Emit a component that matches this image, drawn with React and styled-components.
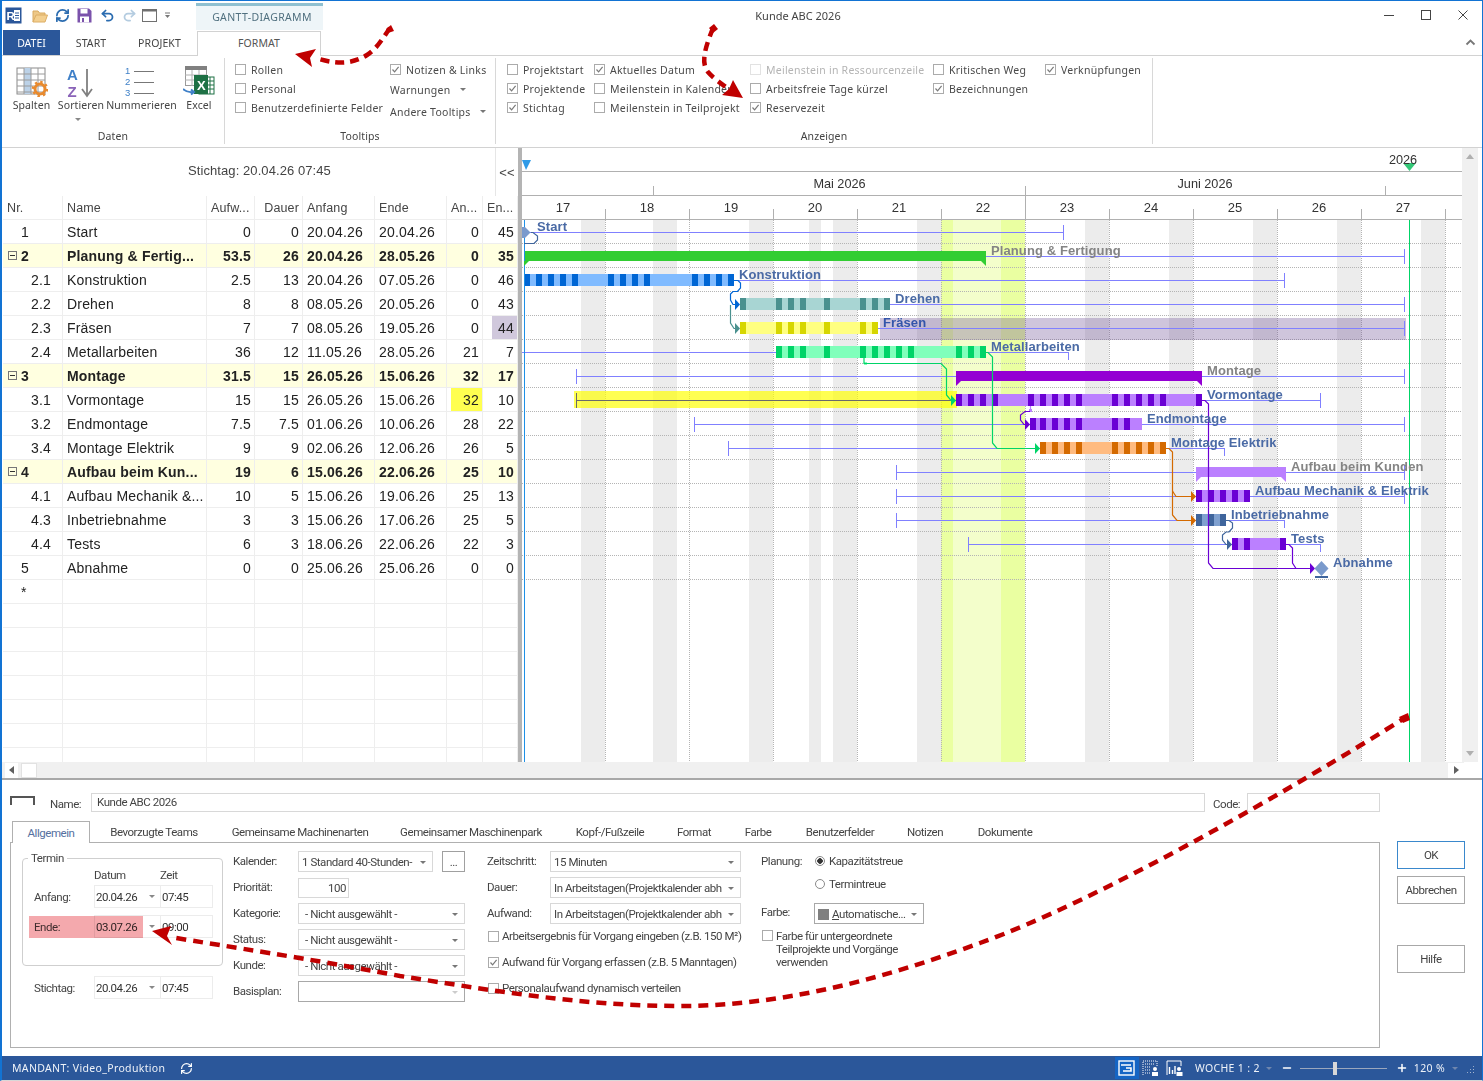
import React from "react";
import styled, { createGlobalStyle } from "styled-components";
import { RefreshCw, Undo2, Redo2, Plus, Minus } from "lucide-react";

const ARIAL = `"Liberation Sans", Arial, sans-serif`;
const RIBBON_FONT = `"Noto Sans", "Open Sans", sans-serif`;
const FORM_FONT = `Roboto, "Noto Sans", sans-serif`;

const GlobalStyle = createGlobalStyle`
  html, body { margin: 0; padding: 0; background: #fff; }
  * { box-sizing: border-box; }
`;

const Window = styled.div`
  position: relative;
  width: 1483px;
  height: 1081px;
  overflow: hidden;
  background: #fff;
  border-top: 1px solid #1273d3;
  border-left: 2px solid #1273d3;
  border-right: 1px solid #1273d3;
  border-bottom: 1px solid #d8d8d8;
  font-family: ${RIBBON_FONT};
  color: #444;
  display: flex;
  flex-direction: column;
`;

/* title bar */
const TitleBar = styled.div`
  height: 29px;
  display: flex;
  flex-shrink: 0;
`;
const Qat = styled.div`
  width: 194px;
  display: flex;
  align-items: center;
  padding: 0 0 0 3px;
`;
const QatSlot = styled.span`
  width: ${(p) => p.$w}px;
  display: flex;
  align-items: center;
`;
const ContextTab = styled.div`
  width: 127px;
  margin-top: 2px;
  padding: 0 0 3px 5px;
  background: #eef5f8;
  border-top: 3px solid #8fc0d0;
  color: #50707f;
  font-size: 10.5px;
  letter-spacing: 0.35px;
  display: flex;
  align-items: center;
  justify-content: center;
`;
const WindowTitle = styled.div`
  width: 950px;
  text-align: center;
  line-height: 29px;
  padding-bottom: 1px;
  font-size: 11px;
  color: #444;
`;
const WindowControls = styled.div`
  margin-left: auto;
  display: flex;
  align-items: center;
  padding: 0 11px 2px 0;
  gap: 21px;
`;

/* ribbon tabs */
const TabBar = styled.div`
  height: 25px;
  display: flex;
  align-items: stretch;
  flex-shrink: 0;
  position: relative;
`;
const FileTab = styled.div`
  width: 57px;
  margin-left: 1px;
  background: #2b579a;
  color: #fff;
  font-size: 10.5px;
  display: flex;
  align-items: center;
  justify-content: center;
`;
const RibbonTab = styled.div`
  width: ${(p) => p.$w}px;
  display: flex;
  align-items: center;
  justify-content: center;
  font-size: 10.5px;
  letter-spacing: 0.1px;
  color: #444;
  ${(p) =>
    p.$active &&
    `background:#fff; border:1px solid #d2d2d2; border-bottom:0; margin-bottom:-1px; z-index:1; margin-top:1px; padding-bottom:2px; color:#555;`}
`;
const Collapse = styled.span`
  margin-left: auto;
  margin-right: 6px;
  padding-bottom: 2px;
  align-self: center;
  display: flex;
`;

/* ribbon */
const Ribbon = styled.div`
  height: 93px;
  flex-shrink: 0;
  display: flex;
  border-top: 1px solid #d2d2d2;
  border-bottom: 1px solid #d2d2d2;
  font-size: 10.5px;
`;
const RibbonGroup = styled.div`
  width: ${(p) => p.$w}px;
  margin: 2px 0 3px;
  border-right: 1px solid #d8d8d8;
  display: flex;
  flex-direction: column;
`;
const GroupBody = styled.div`
  flex: 1;
  min-height: 0;
  display: flex;
  padding: ${(p) => p.$pad || "2px 0 0 0"};
`;
const GroupLabel = styled.div`
  height: 16px;
  flex-shrink: 0;
  text-align: center;
  line-height: 16px;
  letter-spacing: 0.1px;
  color: #444;
`;
const BigButton = styled.div`
  width: ${(p) => p.$w}px;
  display: flex;
  flex-direction: column;
  align-items: center;
  letter-spacing: 0.1px;
  white-space: nowrap;
  color: #444;
`;
const BigIcon = styled.div`
  height: 36px;
  width: 100%;
  display: flex;
  align-items: flex-end;
  justify-content: center;
  margin-bottom: 1px;
`;
const SortSvg = styled.svg`
  display: block;
  margin-bottom: -3px;
  overflow: visible;
`;
const SortCaret = styled.span`
  margin: 6px 6px 0 0;
  display: flex;
`;
const CheckColumn = styled.div`
  width: ${(p) => p.$w}px;
  display: flex;
  flex-direction: column;
`;
const CheckRow = styled.label`
  height: 19px;
  display: flex;
  align-items: center;
  gap: 5px;
  white-space: nowrap;
  letter-spacing: 0.25px;
  color: ${(p) => (p.$off ? "#b4b4b4" : "#4a4a4a")};
`;
const Box = styled.span`
  width: 11px;
  height: 11px;
  flex-shrink: 0;
  border: 1px solid ${(p) => (p.$off ? "#e2e2e2" : "#ababab")};
  background: #fff;
  display: flex;
  align-items: center;
  justify-content: center;
`;
const DropRow = styled.div`
  height: ${(p) => p.$h}px;
  display: flex;
  align-items: center;
  gap: ${(p) => p.$gap}px;
  white-space: nowrap;
  letter-spacing: 0.25px;
  color: #4a4a4a;
`;
const Caret = styled.span`
  width: 0;
  height: 0;
  flex-shrink: 0;
  border-left: 3px solid transparent;
  border-right: 3px solid transparent;
  border-top: 3px solid ${(p) => p.$color || "#777"};
`;

/* gantt */
const GanttArea = styled.div`
  height: 630px;
  flex-shrink: 0;
  display: flex;
  flex-direction: column;
`;
const Panes = styled.div`
  height: 614px;
  display: flex;
`;
const LeftPane = styled.div`
  width: 516px;
  padding-left: 1px;
  flex-shrink: 0;
  display: flex;
  flex-direction: column;
  font-family: ${ARIAL};
`;
const DateStrip = styled.div`
  height: 48px;
  display: flex;
  flex-shrink: 0;
  color: #444;
  font-size: 13px;
  letter-spacing: 0.08px;
`;
const StripLabel = styled.div`
  width: 493px;
  text-align: center;
  line-height: 46px;
  border-right: 1px solid #e6e6e6;
  padding-left: 21px;
`;
const StripToggle = styled.div`
  flex: 1;
  text-align: center;
  line-height: 48px;
  padding-top: 1px;
`;
const TableBody = styled.div`
  height: 542px;
  overflow: hidden;
`;
const Row = styled.div`
  height: 24px;
  display: grid;
  grid-template-columns: 60px 144px 48px 48px 72px 72px 36px 35px;
  background: ${(p) => (p.$summary ? "#ffffe0" : "#fff")};
  font-weight: ${(p) => (p.$summary ? 700 : 400)};
  font-size: 14px;
  letter-spacing: 0.18px;
  color: #222;
`;
const HeaderRow = styled(Row)`
  font-size: 12.5px;
  letter-spacing: 0.15px;
  color: #444;
`;
const Cell = styled.div`
  display: flex;
  align-items: center;
  justify-content: ${(p) => (p.$right ? "flex-end" : "flex-start")};
  padding: ${(p) => (p.$right ? "0 3px 0 0" : "0 0 0 4px")};
  border-right: 1px solid #eee;
  border-bottom: 1px solid #eee;
  white-space: nowrap;
  overflow: hidden;
  ${(p) =>
    p.$mark &&
    `background: linear-gradient(${p.$mark}, ${p.$mark}) right / ${p.$markW}px 100% no-repeat;`}
`;
const NrCell = styled(Cell)`
  padding-left: ${(p) => p.$indent}px;
  gap: 4px;
`;
const Fold = styled.span`
  width: 9px;
  height: 9px;
  margin-left: -13px;
  border: 1px solid #777;
  background: linear-gradient(#333, #333) center / 5px 1px no-repeat;
`;
const Splitter = styled.div`
  width: 4px;
  flex-shrink: 0;
  background: #b4b4b4;
`;
const ChartSvg = styled.svg`
  display: block;
  flex-shrink: 0;
`;
const VScroll = styled.div`
  width: 16px;
  flex-shrink: 0;
  background: #f0f0f0;
  display: flex;
  flex-direction: column;
  justify-content: space-between;
  align-items: center;
  padding: 6px 0;
`;
const Tri = styled.span`
  width: 0;
  height: 0;
  border-left: 4px solid transparent;
  border-right: 4px solid transparent;
  ${(p) => (p.$dir === "up" ? "border-bottom" : "border-top")}: 5px solid #b0b0b0;
`;
const HScroll = styled.div`
  height: 16px;
  margin-right: 18px;
  background: #f0f0f0;
  display: flex;
  align-items: center;
  padding: 0 0 0 3px;
`;
const ScrollButton = styled.span`
  width: 13px;
  height: 15px;
  background: #fff;
  display: flex;
  align-items: center;
  justify-content: center;
  ${(p) => p.$end && "margin-left:auto; width:16px;"}
`;
const HTri = styled.span`
  width: 0;
  height: 0;
  border-top: 4px solid transparent;
  border-bottom: 4px solid transparent;
  ${(p) => (p.$dir === "left" ? "border-right" : "border-left")}: 5px solid #606060;
`;
const ScrollThumb = styled.span`
  width: 16px;
  height: 15px;
  margin-left: 3px;
  background: #fff;
  border: 1px solid #e2e2e2;
`;
const Divider = styled.div`
  height: 2px;
  flex-shrink: 0;
  background: #a8a8a8;
`;

/* detail form */
const Detail = styled.div`
  height: 276px;
  flex-shrink: 0;
  padding: 13px 0 0 8px;
  font-family: ${FORM_FONT};
  font-size: 11.5px;
  letter-spacing: -0.45px;
  color: #444;
`;
const NameRow = styled.div`
  height: 19px;
  display: flex;
  align-items: center;
`;
const ShapeMark = styled.span`
  width: 25px;
  height: 9px;
  margin: 0 15px 4px 0;
  border: 2px solid #555;
  border-bottom: 0;
`;
const NameLabel = styled.span`
  width: ${(p) => p.$w}px;
  padding-top: 2px;
`;
const TextInput = styled.div`
  width: ${(p) => p.$w}px;
  height: 19px;
  border: 1px solid #d8d8d8;
  padding-left: 5px;
  line-height: 16px;
  ${(p) => p.$gap && `margin-right:${p.$gap}px;`}
`;
const DetailBody = styled.div`
  display: flex;
  margin-top: 9px;
`;
const FormColumn = styled.div`
  width: 1370px;
  flex-shrink: 0;
`;
const FormTabs = styled.div`
  display: flex;
  height: 21px;
  padding-left: 2px;
`;
const FormTab = styled.div`
  width: ${(p) => p.$w}px;
  display: flex;
  align-items: center;
  justify-content: center;
  padding-top: 1px;
  white-space: nowrap;
  ${(p) =>
    p.$active &&
    `border:1px solid #b0b0b0; border-bottom:0; background:#fff; margin-bottom:-1px; height:22px; color:#5570a0; position:relative; z-index:1;`}
`;
const TabPanel = styled.div`
  height: 206px;
  border: 1px solid #b0b0b0;
  display: flex;
  padding: 8px 0 0 11px;
`;
const TermColumn = styled.div`
  width: 211px;
  flex-shrink: 0;
`;
const TermSet = styled.fieldset`
  width: 201px;
  height: 114px;
  margin: 1px 0 0;
  padding: 0;
  border: 1px solid #cfcfcf;
  border-radius: 4px;
`;
const TermLegend = styled.legend`
  margin-left: 5px;
  padding: 0 3px;
  line-height: 13px;
`;
const TermHead = styled.div`
  height: 16px;
  margin-top: 2px;
  display: grid;
  grid-template-columns: 71px 66px 53px;
  align-items: center;
`;
const DateRow = styled.div`
  position: relative;
  display: grid;
  grid-template-columns: 71px 66px 53px;
  align-items: center;
  height: 23px;
  margin-top: ${(p) => p.$top || 0}px;
  ${(p) =>
    p.$flag &&
    `&::after { content:""; position:absolute; left:6px; top:1px; width:114px; height:22px; background:#f4a9ad; mix-blend-mode:multiply; }`}
`;
const StandaloneRow = styled(DateRow)`
  grid-template-columns: 72px 66px 53px;
  margin-top: 10px;
`;
const DateLabel = styled.span`
  padding-left: ${(p) => p.$pad || 11}px;
`;
const DateBox = styled.div`
  height: 23px;
  border: 1px solid #ececec;
  border-right: 0;
  display: flex;
  align-items: center;
  justify-content: space-between;
  padding: 0 5px 0 1px;
  color: #333;
`;
const TimeBox = styled.div`
  height: 23px;
  border: 1px solid #ececec;
  display: flex;
  align-items: center;
  padding-left: 1px;
  color: #333;
`;
const FieldColumn = styled.div`
  width: ${(p) => p.$w}px;
  flex-shrink: 0;
  display: flex;
  flex-direction: column;
  gap: 5px;
`;
const FieldRow = styled.div`
  height: ${(p) => p.$h || 21}px;
  display: flex;
  align-items: ${(p) => p.$align || "center"};
  gap: ${(p) => p.$gap || 0}px;
  margin-top: ${(p) => p.$top || 0}px;
`;
const FieldLabel = styled.span`
  width: ${(p) => p.$w}px;
  flex-shrink: 0;
  padding-top: ${(p) => p.$pt || 0}px;
  padding-bottom: ${(p) => p.$pb ?? 1}px;
`;
const Select = styled.div`
  width: ${(p) => p.$w}px;
  height: ${(p) => p.$h || 21}px;
  border: 1px solid ${(p) => p.$border || "#d8d8d8"};
  padding: 1px 6px 0 ${(p) => p.$pad || 3}px;
  display: flex;
  align-items: center;
  justify-content: space-between;
  white-space: nowrap;
  overflow: hidden;
  background: #fff;
`;
const DotsButton = styled.div`
  width: 23px;
  height: 21px;
  border: 1px solid #a0a0a0;
  text-align: center;
  line-height: 20px;
`;
const NumberInput = styled.div`
  width: 51px;
  height: 20px;
  border: 1px solid #d8d8d8;
  text-align: right;
  padding-right: 2px;
  line-height: 18px;
`;
const FormChecks = styled.div`
  margin-top: -6px;
  display: flex;
  flex-direction: column;
`;
const FormCheck = styled.label`
  height: 26px;
  display: flex;
  align-items: center;
  gap: 3px;
  margin-left: 1px;
  white-space: nowrap;
`;
const PlanColumn = styled.div`
  flex: 1;
  display: flex;
  flex-direction: column;
`;
const RadioStack = styled.div`
  display: flex;
  flex-direction: column;
  margin-top: -2px;
`;
const RadioRow = styled.label`
  height: 23px;
  display: flex;
  align-items: center;
  gap: 4px;
`;
const Radio = styled.span`
  width: 10px;
  height: 10px;
  border: 1px solid #8a8a8a;
  border-radius: 50%;
  background: ${(p) =>
    p.$on ? "radial-gradient(circle, #333 0 2.5px, #fff 3px)" : "#fff"};
`;
const Swatch = styled.span`
  width: 11px;
  height: 11px;
  background: #808080;
  margin-right: 3px;
  flex-shrink: 0;
`;
const SwatchText = styled.span`
  flex: 1;
`;
const AreaCheck = styled.label`
  display: flex;
  gap: 3px;
  margin: 6px 0 0 1px;
  line-height: 13px;
  white-space: pre-line;
`;
const ButtonColumn = styled.div`
  width: 68px;
  margin-left: 17px;
  padding-top: 20px;
  display: flex;
  flex-direction: column;
  gap: 7px;
`;
const ActionButton = styled.div`
  height: 28px;
  display: flex;
  align-items: center;
  justify-content: center;
  border: 1px solid ${(p) => (p.$primary ? "#3a88cc" : "#a8a8a8")};
  ${(p) => p.$top && `margin-top:${p.$top}px;`}
`;

/* status bar */
const StatusBar = styled.div`
  height: 24px;
  flex-shrink: 0;
  background: #2b579a;
  color: #eef2f8;
  display: flex;
  align-items: center;
  font-size: 10.5px;
  letter-spacing: 0.34px;
  padding-left: 10px;
`;
const StatusRefresh = styled.span`
  margin-left: 15px;
  display: flex;
`;
const StatusRight = styled.div`
  margin-left: auto;
  display: flex;
  align-items: center;
  height: 100%;
  padding-right: 7px;
`;
const StatusItem = styled.span`
  margin-left: ${(p) => p.$ml || 0}px;
  display: flex;
  align-items: center;
`;
const ViewButton = styled.span`
  width: 24px;
  height: 22px;
  display: flex;
  align-items: center;
  justify-content: center;
  background: ${(p) => (p.$active ? "#1565c4" : "transparent")};
`;
const ZoomSlider = styled.span`
  position: relative;
  width: 87px;
  height: 1px;
  background: #9aa7bd;
  margin: 0 9px 0 7px;
  &::after {
    content: "";
    position: absolute;
    left: 33px;
    top: -6px;
    width: 4px;
    height: 13px;
    background: #d8d8d8;
  }
`;
const Grip = styled.span`
  width: 9px;
  height: 9px;
  margin: 2px 0 0 8px;
  background: radial-gradient(circle, #a8b8d0 1px, transparent 1px) 0 0 / 3px 3px;
  clip-path: polygon(100% 0, 100% 100%, 0 100%);
`;

const ArrowLayer = styled.svg`
  position: absolute;
  left: -2px;
  top: -1px;
  width: 1483px;
  height: 1081px;
  pointer-events: none;
  z-index: 5;
`;

/* table data */
const rows = [
  { nr: "1", name: "Start", a: "0", d: "0", s: "20.04.26", e: "20.04.26", an: "0", en: "45", indent: 18 },
  { nr: "2", name: "Planung & Fertig...", a: "53.5", d: "26", s: "20.04.26", e: "28.05.26", an: "0", en: "35", summary: true },
  { nr: "2.1", name: "Konstruktion", a: "2.5", d: "13", s: "20.04.26", e: "07.05.26", an: "0", en: "46", indent: 28 },
  { nr: "2.2", name: "Drehen", a: "8", d: "8", s: "08.05.26", e: "20.05.26", an: "0", en: "43", indent: 28 },
  { nr: "2.3", name: "Fräsen", a: "7", d: "7", s: "08.05.26", e: "19.05.26", an: "0", en: "44", indent: 28, enMark: "#d0c8dc" },
  { nr: "2.4", name: "Metallarbeiten", a: "36", d: "12", s: "11.05.26", e: "28.05.26", an: "21", en: "7", indent: 28 },
  { nr: "3", name: "Montage", a: "31.5", d: "15", s: "26.05.26", e: "15.06.26", an: "32", en: "17", summary: true },
  { nr: "3.1", name: "Vormontage", a: "15", d: "15", s: "26.05.26", e: "15.06.26", an: "32", en: "10", indent: 28, anMark: "#ffff50" },
  { nr: "3.2", name: "Endmontage", a: "7.5", d: "7.5", s: "01.06.26", e: "10.06.26", an: "28", en: "22", indent: 28 },
  { nr: "3.4", name: "Montage Elektrik", a: "9", d: "9", s: "02.06.26", e: "12.06.26", an: "26", en: "5", indent: 28 },
  { nr: "4", name: "Aufbau beim Kun...", a: "19", d: "6", s: "15.06.26", e: "22.06.26", an: "25", en: "10", summary: true },
  { nr: "4.1", name: "Aufbau Mechanik &...", a: "10", d: "5", s: "15.06.26", e: "19.06.26", an: "25", en: "13", indent: 28 },
  { nr: "4.3", name: "Inbetriebnahme", a: "3", d: "3", s: "15.06.26", e: "17.06.26", an: "25", en: "5", indent: 28 },
  { nr: "4.4", name: "Tests", a: "6", d: "3", s: "18.06.26", e: "22.06.26", an: "22", en: "3", indent: 28 },
  { nr: "5", name: "Abnahme", a: "0", d: "0", s: "25.06.26", e: "25.06.26", an: "0", en: "0", indent: 18 },
  { nr: "*", name: "", indent: 18 },
  {}, {}, {}, {}, {}, {}, {}, {},
];

/* chart data: page coordinates, the svg viewBox starts at 522,148 */
const weekTicks = [605, 689, 773, 857, 941, 1025, 1109, 1193, 1277, 1361, 1445];
const weekLabels = [17, 18, 19, 20, 21, 22, 23, 24, 25, 26, 27];
const offBands = [
  [581, 24], [653, 24], [749, 24], [809, 12], [833, 24], [917, 24],
  [1085, 24], [1169, 24], [1253, 24], [1337, 24], [1421, 24],
];

const baselines = [
  { y: 232, x1: 522, x2: 1063 },
  { y: 256, x1: 986, x2: 1404 },
  { y: 280, x1: 734, x2: 1284 },
  { y: 304, x1: 890, x2: 1404 },
  { y: 328, x1: 878, x2: 1404 },
  { y: 352, x1: 522, x2: 1068, endShort: true },
  { y: 376, x1: 576, x2: 1404, start: true },
  { y: 400, x1: 1202, x2: 1320 },
  { y: 424, x1: 694, x2: 1404, start: true },
  { y: 448, x1: 728, x2: 1224, start: true, endShort: true },
  { y: 472, x1: 896, x2: 1404, start: true },
  { y: 496, x1: 896, x2: 1404, start: true },
  { y: 520, x1: 896, x2: 1284, start: true, endShort: true },
  { y: 544, x1: 968, x2: 1320, start: true, endShort: true },
];

const BLUE = ["#80bbff", "#0066d4"];
const TEAL = ["#a8d5d3", "#4a918f"];
const LEMON = ["#ffff80", "#d6d600"];
const MINT = ["#80ffbb", "#00d468"];
const VIOLET = ["#bb80ff", "#6a00d4"];
const ORANGE = ["#ffbb80", "#d46a00"];
const STEEL = ["#7fa0cf", "#3f659c"];

const bars = [
  { y: 280, x1: 524, x2: 734, c: BLUE, dark: [524, 536, 548, 560, 572, 608, 620, 632, 644, 692, 704, 716, 728] },
  { y: 304, x1: 740, x2: 890, c: TEAL, dark: [740, 776, 788, 800, 824, 860, 872, 884] },
  { y: 328, x1: 740, x2: 878, c: LEMON, dark: [740, 776, 788, 800, 824, 860, 872] },
  { y: 352, x1: 776, x2: 986, c: MINT, dark: [776, 788, 800, 824, 860, 872, 884, 896, 908, 956, 968, 980] },
  { y: 400, x1: 956, x2: 1202, c: VIOLET, dark: [956, 968, 980, 992, 1028, 1040, 1052, 1064, 1076, 1112, 1124, 1136, 1148, 1160, 1196] },
  { y: 424, x1: 1030, x2: 1142, c: VIOLET, dark: [1030, 1040, 1052, 1064, 1076, 1112, 1124] },
  { y: 448, x1: 1040, x2: 1166, c: ORANGE, dark: [1040, 1052, 1064, 1076, 1112, 1124, 1136, 1148, 1160] },
  { y: 496, x1: 1196, x2: 1250, c: VIOLET, dark: [1196, 1208, 1220, 1232, 1244] },
  { y: 520, x1: 1196, x2: 1226, c: STEEL, dark: [1196, 1208, 1220] },
  { y: 544, x1: 1232, x2: 1286, c: VIOLET, dark: [1232, 1244, 1280] },
];

const summaries = [
  { y: 251, x1: 524, x2: 986, c: "#32cd32" },
  { y: 371, x1: 956, x2: 1202, c: "#9400d3" },
  { y: 467, x1: 1196, x2: 1286, c: "#bb80ff" },
];

const labels = [
  { x: 537, y: 231, t: "Start" },
  { x: 991, y: 255, t: "Planung & Fertigung", c: "#848484" },
  { x: 739, y: 279, t: "Konstruktion" },
  { x: 895, y: 303, t: "Drehen" },
  { x: 883, y: 327, t: "Fräsen", c: "#3355aa" },
  { x: 991, y: 351, t: "Metallarbeiten" },
  { x: 1207, y: 375, t: "Montage", c: "#848484" },
  { x: 1207, y: 399, t: "Vormontage" },
  { x: 1147, y: 423, t: "Endmontage" },
  { x: 1171, y: 447, t: "Montage Elektrik" },
  { x: 1291, y: 471, t: "Aufbau beim Kunden", c: "#848484" },
  { x: 1255, y: 495, t: "Aufbau Mechanik & Elektrik" },
  { x: 1231, y: 519, t: "Inbetriebnahme" },
  { x: 1291, y: 543, t: "Tests" },
  { x: 1333, y: 567, t: "Abnahme" },
];

const links = [
  { c: "#3f659c", d: "M531 232.5 H533 L537.5 236 V240 L534 243.5 H524" },
  { c: "#0066d4", d: "M734 280.5 H738 L740.5 283 V288 L737.5 291.5 H733 L730.5 294 V300 L733 304.5 H736" },
  { c: "#4a918f", d: "M730.5 305 V323 L734 328.5 H736" },
  { c: "#00d468", d: "M864 358 V363.5 H941 L946.5 369 V395 L951 400.5 H952" },
  { c: "#00d468", d: "M986 352.5 H988 L992.5 357 V443 L997 448.5 H1036" },
  { c: "#6a00d4", d: "M1202 400.5 H1205 L1208.5 404 V563 L1213 568.5 H1311" },
  { c: "#bb80ff", d: "M1030.5 406 V411" },
  { c: "#6a00d4", d: "M1030 411.5 H1025 L1020.5 415 V420 L1024 424.5 H1026" },
  { c: "#d46a00", d: "M1166 448.5 H1169 L1172.5 452 V515 L1177 520.5 H1192" },
  { c: "#d46a00", d: "M1172.5 491 L1176 496.5 H1192" },
  { c: "#3f659c", d: "M1226 520.5 H1229 L1232.5 523 V528 L1229 532 H1226 L1222.5 535 V540 L1226 544.5 H1228" },
  { c: "#6a00d4", d: "M1286 544.5 H1289 L1292.5 548 V563 L1296 568.5 H1300" },
];

const heads = [
  { x: 735, y: 304, c: "#0066d4" },
  { x: 735, y: 328, c: "#4a918f" },
  { x: 951, y: 400, c: "#00d468" },
  { x: 1025, y: 424, c: "#6a00d4" },
  { x: 1035, y: 448, c: "#00d468" },
  { x: 1191, y: 496, c: "#d46a00" },
  { x: 1191, y: 520, c: "#d46a00" },
  { x: 1227, y: 544, c: "#3f659c" },
  { x: 1310, y: 568, c: "#6a00d4" },
];

const formTabs = [
  ["Allgemein", 78], ["Bevorzugte Teams", 128], ["Gemeinsame Machinenarten", 164],
  ["Gemeinsamer Maschinenpark", 178], ["Kopf-/Fußzeile", 100], ["Format", 68],
  ["Farbe", 60], ["Benutzerfelder", 104], ["Notizen", 66], ["Dokumente", 94],
];

const CheckMark = () => (
  <svg width="9" height="9" viewBox="0 0 9 9">
    <path d="M1.5 4.5 L3.6 6.8 L7.6 1.8" fill="none" stroke="#7a7a7a" strokeWidth="1.2" />
  </svg>
);

const Check = ({ on, off, children }) => (
  <CheckRow $off={off}>
    <Box $off={off}>{on && <CheckMark />}</Box>
    {children}
  </CheckRow>
);

const SpaltenIcon = () => (
  <svg width="32" height="30" viewBox="0 0 32 30">
    <rect x="1" y="1" width="28" height="26" fill="#fff" stroke="#8a8a8a" />
    <rect x="8" y="1" width="7" height="26" fill="#bcd2e8" />
    <path d="M1 7 H29 M1 13 H29 M1 19 H29 M1 25 H29 M8 1 V27 M15 1 V27 M22 1 V27" stroke="#9a9a9a" strokeWidth="1" />
    <circle cx="24" cy="22" r="5" fill="none" stroke="#e88a2e" strokeWidth="3" />
    <circle cx="24" cy="22" r="7" fill="none" stroke="#e88a2e" strokeWidth="2.4" strokeDasharray="2.4 3.1" />
  </svg>
);

const SortIcon = () => (
  <SortSvg width="28" height="34" viewBox="0 0 28 34">
    <text x="0" y="14" fontFamily={ARIAL} fontSize="15" fontWeight="700" fill="#3f80c8">A</text>
    <text x="0.5" y="31" fontFamily={ARIAL} fontSize="15" fontWeight="700" fill="#8a63b8">Z</text>
    <path d="M20 3 V29 M15 23 L20 30 L25 23" fill="none" stroke="#808080" strokeWidth="1.8" />
  </SortSvg>
);

const NumberIcon = () => (
  <svg width="34" height="32" viewBox="0 0 34 32">
    <g fontFamily={ARIAL} fontSize="9.5" fill="#3f80c8">
      <text x="0" y="9">1</text>
      <text x="0" y="20">2</text>
      <text x="0" y="31">3</text>
    </g>
    <path d="M9 6.5 H29 M9 17.5 H29 M9 28.5 H29" stroke="#777" strokeWidth="1" />
  </svg>
);

const ExcelIcon = () => (
  <svg width="32" height="32" viewBox="0 0 32 32">
    <rect x="2.5" y="1.5" width="21" height="19" fill="#fff" stroke="#9a9a9a" />
    <rect x="2" y="1" width="22" height="4" fill="#808080" />
    <path d="M2 10 H24 M2 15 H24 M9 5 V21 M16 5 V21" stroke="#b0b0b0" />
    <rect x="16" y="12" width="15" height="17" fill="#fff" stroke="#1e7145" />
    <path d="M23 12 V29 M23 16 H31 M23 20 H31 M23 24 H31 M27 12 V29" stroke="#1e7145" strokeWidth="1" />
    <rect x="11" y="10" width="14" height="19" fill="#1e7145" />
    <text x="14" y="24.5" fontFamily={ARIAL} fontSize="13" fontWeight="700" fill="#fff">X</text>
    <path d="M0 24 C3 27 7 27.5 11 27 M8 24.5 L11 27 L8 29.5" fill="none" stroke="#3f80c8" strokeWidth="2" />
  </svg>
);

const AppIcon = () => (
  <svg width="17" height="17" viewBox="0 0 17 17">
    <rect x="0.5" y="0.5" width="16" height="16" fill="#2b579a" />
    <rect x="9" y="3" width="6" height="11" fill="#fff" />
    <path d="M10 6 H14 M10 8.5 H14 M10 11 H14" stroke="#2b579a" />
    <text x="1.5" y="13" fontFamily={ARIAL} fontSize="11.5" fontWeight="700" fill="#fff">R</text>
  </svg>
);

const FolderIcon = () => (
  <svg width="16" height="14" viewBox="0 0 16 14">
    <path d="M1 13 V2 H6 L7.5 4 H13 V6" fill="#edc888" stroke="#d9aa60" />
    <path d="M1 13 L4 6 H15.5 L13 13 Z" fill="#f3cf8f" stroke="#dcae66" />
  </svg>
);

const SaveIcon = () => (
  <svg width="15" height="15" viewBox="0 0 15 15">
    <path d="M0.5 0.5 H12 L14.5 3 V14.5 H0.5 Z" fill="#7b52ab" />
    <rect x="3.5" y="1" width="7" height="4.5" fill="#fff" />
    <rect x="3" y="8.5" width="9" height="6" fill="#fff" />
    <rect x="5" y="10" width="2" height="4" fill="#7b52ab" />
  </svg>
);

const QatShape = () => (
  <svg width="16" height="14" viewBox="0 0 16 14">
    <rect x="0.5" y="0.5" width="14" height="12" fill="#fff" stroke="#707070" />
    <rect x="0.5" y="0.5" width="14" height="2" fill="#707070" />
  </svg>
);

const QatDrop = () => (
  <svg width="7" height="7" viewBox="0 0 7 7">
    <path d="M1 1 H6" stroke="#777" />
    <path d="M1 3 H6 L3.5 6 Z" fill="#777" />
  </svg>
);

const Minimize = () => (
  <svg width="16" height="12" viewBox="0 0 16 12">
    <path d="M3 6.5 H13" stroke="#444" />
  </svg>
);
const Maximize = () => (
  <svg width="16" height="12" viewBox="0 0 16 12">
    <rect x="3.5" y="1.5" width="9" height="9" fill="none" stroke="#444" />
  </svg>
);
const Close = () => (
  <svg width="16" height="12" viewBox="0 0 16 12">
    <path d="M3.5 1.5 L12.5 10.5 M12.5 1.5 L3.5 10.5" stroke="#444" />
  </svg>
);

const GanttView = () => (
  <svg width="17" height="16" viewBox="0 0 17 16">
    <rect x="1" y="1" width="15" height="14" fill="none" stroke="#fff" strokeWidth="1.4" />
    <path d="M3 5 H13 M8 8 H13 V11 H5" fill="none" stroke="#fff" strokeWidth="1.6" />
  </svg>
);
const TeamView = () => (
  <svg width="17" height="16" viewBox="0 0 17 16">
    <path d="M1 15 V1 H15 V7" fill="none" stroke="#fff" strokeDasharray="1 1" />
    <path d="M3 4 H13 M3 7 H9 M3 10 H9 M3 13 H9" stroke="#fff" strokeDasharray="1 1" />
    <circle cx="13" cy="9" r="2" fill="#fff" />
    <rect x="10" y="12" width="6" height="4" fill="#fff" />
  </svg>
);
const ChartView = () => (
  <svg width="17" height="16" viewBox="0 0 17 16">
    <path d="M1 15 V1 H15 V6" fill="none" stroke="#fff" />
    <path d="M3.5 14 V7 M6.5 14 V10 M9 14 V6" stroke="#fff" strokeWidth="1.4" />
    <circle cx="13" cy="9" r="2" fill="#fff" />
    <rect x="10.5" y="12" width="6" height="4" fill="#fff" />
  </svg>
);

const Chart = () => (
  <ChartSvg width="940" height="614" viewBox="522 148 940 614">
    <g shapeRendering="crispEdges">
      {offBands.map(([x, w]) => (
        <rect key={x} x={x} y="220" width={w} height="542" fill="#ececec" />
      ))}
      <rect x="941" y="220" width="84" height="542" fill="#f3fecb" />
      <rect x="941" y="220" width="12" height="542" fill="#eaffa1" />
      <rect x="1001" y="220" width="24" height="542" fill="#eaffa1" />

      {Array.from({ length: 15 }, (_, i) => (
        <line key={i} x1="522" x2="1462" y1={243.5 + i * 24} y2={243.5 + i * 24} stroke="#b4b4b4" strokeDasharray="1 1" />
      ))}
      {weekTicks.map((x) => (
        <line key={x} x1={x + 0.5} x2={x + 0.5} y1="220" y2="762" stroke="#b4b4b4" strokeDasharray="1 1" />
      ))}

      <line x1="522" x2="1462" y1="171.5" y2="171.5" stroke="#b0b0b0" />
      <line x1="522" x2="1462" y1="195.5" y2="195.5" stroke="#b0b0b0" />
      <line x1="522" x2="1462" y1="219.5" y2="219.5" stroke="#b0b0b0" />
      {weekTicks.map((x) => (
        <line key={x} x1={x + 0.5} x2={x + 0.5} y1="209" y2="219" stroke="#b0b0b0" />
      ))}
      <line x1="653.5" x2="653.5" y1="186" y2="195" stroke="#b0b0b0" />
      <line x1="1025.5" x2="1025.5" y1="186" y2="219" stroke="#b0b0b0" />
      <line x1="1385.5" x2="1385.5" y1="186" y2="195" stroke="#b0b0b0" />

      <rect x="880" y="318" width="526" height="22" fill="rgba(110, 80, 150, 0.33)" />
      <rect x="574" y="391" width="383" height="17" fill="rgba(255, 255, 0, 0.68)" />

      {baselines.map((b) => (
        <g key={b.y} stroke="#8080ff">
          <line x1={b.x1} x2={b.x2} y1={b.y + 0.5} y2={b.y + 0.5} />
          {b.start && <line x1={b.x1 + 0.5} x2={b.x1 + 0.5} y1={b.y - 7} y2={b.y + 8} />}
          <line x1={b.x2 + 0.5} x2={b.x2 + 0.5} y1={b.endShort ? b.y : b.y - 7} y2={b.y + 8} />
        </g>
      ))}
      <line x1="576" x2="956" y1="400.5" y2="400.5" stroke="#6a6a6a" />
      <line x1="576.5" x2="576.5" y1="393" y2="408" stroke="#6a6a6a" />

      {bars.map((b) => (
        <g key={b.y}>
          <rect x={b.x1} y={b.y - 6} width={b.x2 - b.x1} height="12" fill={b.c[0]} />
          {b.dark.map((x) => (
            <rect key={x} x={x} y={b.y - 6} width="6" height="12" fill={b.c[1]} />
          ))}
        </g>
      ))}
      {summaries.map((s) => (
        <rect key={s.y} x={s.x1} y={s.y} width={s.x2 - s.x1} height="10" fill={s.c} />
      ))}
      <line x1="524.5" x2="524.5" y1="220" y2="762" stroke="#1e90e6" />
      <line x1="1409.5" x2="1409.5" y1="220" y2="762" stroke="#00d468" />
      <rect x="864" y="362" width="3" height="3" fill="#80ffbb" />
      <rect x="1029" y="409" width="3" height="3" fill="#bb80ff" />
      <rect x="1315" y="576" width="13" height="2" fill="#3f659c" />
    </g>

    {summaries.map((s) => (
      <g key={s.y} fill={s.c}>
        <path d={`M${s.x1} ${s.y + 10} H${s.x1 + 5} L${s.x1} ${s.y + 15} Z`} />
        <path d={`M${s.x2} ${s.y + 10} H${s.x2 - 5} L${s.x2} ${s.y + 15} Z`} />
      </g>
    ))}

    {links.map((l, i) => (
      <path key={i} d={l.d} fill="none" stroke={l.c} strokeWidth="1.2" />
    ))}
    {heads.map((h) => (
      <path key={h.x + "-" + h.y} d={`M${h.x} ${h.y - 5} L${h.x + 5} ${h.y + 0.5} L${h.x} ${h.y + 6} Z`} fill={h.c} />
    ))}

    <path d="M522 227 H525 L530.5 232.5 L525 238 H522 Z" fill="#7a9acc" />
    <path d="M1321.5 561 L1328.5 568.5 L1321.5 576 L1314.5 568.5 Z" fill="#7a9acc" />
    <path d="M522 160 H531 L526 170 Z" fill="#2f9be8" />
    <path d="M1403 163 H1416 L1409.5 171 Z" fill="#33c877" />

    <g fontFamily={ARIAL} fontSize="12.7" fill="#333" textAnchor="middle">
      <text x="1403" y="164">2026</text>
      <text x="839.5" y="188">Mai 2026</text>
      <text x="1205" y="188">Juni 2026</text>
      {weekLabels.map((w, i) => (
        <text key={w} x={weekTicks[i] - 42} y="212" fontSize="13">{w}</text>
      ))}
    </g>
    <g fontFamily={ARIAL} fontSize="13" fontWeight="700" letterSpacing="0.1">
      {labels.map((l) => (
        <text key={l.t} x={l.x} y={l.y} fill={l.c || "#4a6aa5"}>{l.t}</text>
      ))}
    </g>
  </ChartSvg>
);

const RedArrows = () => (
  <ArrowLayer viewBox="0 0 1483 1081">
    <g fill="none" stroke="#c00000" strokeWidth="4.5">
      <path d="M390 28 C384 36 378 48 367 55 C354 63 340 65 319 59" strokeDasharray="9 6" />
      <path d="M713 28 C706 46 700 62 708 72 C714 79 722 84 730 90" strokeDasharray="9 6" />
      <path d="M1408 716 C1290 790 1100 900 980 943 C880 980 780 1006 680 1006 C580 1006 490 990 400 976 C300 957 230 947 170 937" strokeDasharray="10 7" />
    </g>
    <g fill="#c00000">
      <path d="M386 29 L391 25 L394 31 L388 33 Z" />
      <path d="M295 54 L316 49 L310 58 L312 67 Z" />
      <path d="M709 28 L714 24 L718 29 L713 33 Z" />
      <path d="M743 98 L722 95 L729 89 L733 80 Z" />
      <path d="M1399 717 L1408 713 L1410 720 L1403 723 Z" />
      <path d="M152 931 L171 926 L167 936 L172 945 Z" />
    </g>
  </ArrowLayer>
);

const DateField = ({ value }) => (
  <DateBox>
    {value}
    <Caret $color="#888" />
  </DateBox>
);

export default function App() {
  return (
    <>
      <GlobalStyle />
      <Window>
        <TitleBar>
          <Qat>
            <QatSlot $w={27}><AppIcon /></QatSlot>
            <QatSlot $w={23}><FolderIcon /></QatSlot>
            <QatSlot $w={22}><RefreshCw size={15} color="#2b6cb0" strokeWidth={2.8} /></QatSlot>
            <QatSlot $w={23}><SaveIcon /></QatSlot>
            <QatSlot $w={22}><Undo2 size={15} color="#2b6cb0" strokeWidth={2.8} /></QatSlot>
            <QatSlot $w={20}><Redo2 size={15} color="#b4cce0" strokeWidth={2.8} /></QatSlot>
            <QatSlot $w={22}><QatShape /></QatSlot>
            <QatSlot $w={8}><QatDrop /></QatSlot>
          </Qat>
          <ContextTab>GANTT-DIAGRAMM</ContextTab>
          <WindowTitle>Kunde ABC 2026</WindowTitle>
          <WindowControls>
            <Minimize />
            <Maximize />
            <Close />
          </WindowControls>
        </TitleBar>

        <TabBar>
          <FileTab>DATEI</FileTab>
          <RibbonTab $w={62}>START</RibbonTab>
          <RibbonTab $w={75}>PROJEKT</RibbonTab>
          <RibbonTab $w={124} $active>FORMAT</RibbonTab>
          <Collapse>
            <svg width="11" height="8" viewBox="0 0 11 8">
              <path d="M1.5 6.5 L5.5 2.5 L9.5 6.5" fill="none" stroke="#777" strokeWidth="1.8" />
            </svg>
          </Collapse>
        </TabBar>

        <Ribbon>
          <RibbonGroup $w={223}>
            <GroupBody $pad="3px 0 0 6px">
              <BigButton $w={47}>
                <BigIcon><SpaltenIcon /></BigIcon>
                Spalten
              </BigButton>
              <BigButton $w={52}>
                <BigIcon><SortIcon /></BigIcon>
                Sortieren
                <SortCaret><Caret $color="#888" /></SortCaret>
              </BigButton>
              <BigButton $w={69}>
                <BigIcon><NumberIcon /></BigIcon>
                Nummerieren
              </BigButton>
              <BigButton $w={46}>
                <BigIcon><ExcelIcon /></BigIcon>
                Excel
              </BigButton>
            </GroupBody>
            <GroupLabel>Daten</GroupLabel>
          </RibbonGroup>

          <RibbonGroup $w={271}>
            <GroupBody $pad="2px 0 0 10px">
              <CheckColumn $w={155}>
                <Check>Rollen</Check>
                <Check>Personal</Check>
                <Check>Benutzerdefinierte Felder</Check>
              </CheckColumn>
              <CheckColumn $w={100}>
                <Check on>Notizen &amp; Links</Check>
                <DropRow $h={21} $gap={10}>Warnungen <Caret /></DropRow>
                <DropRow $h={23} $gap={9}>Andere Tooltips <Caret /></DropRow>
              </CheckColumn>
            </GroupBody>
            <GroupLabel>Tooltips</GroupLabel>
          </RibbonGroup>

          <RibbonGroup $w={657}>
            <GroupBody $pad="2px 0 0 11px">
              <CheckColumn $w={87}>
                <Check>Projektstart</Check>
                <Check on>Projektende</Check>
                <Check on>Stichtag</Check>
              </CheckColumn>
              <CheckColumn $w={156}>
                <Check on>Aktuelles Datum</Check>
                <Check>Meilenstein in Kalender</Check>
                <Check>Meilenstein in Teilprojekt</Check>
              </CheckColumn>
              <CheckColumn $w={183}>
                <Check off>Meilenstein in Ressourcenzeile</Check>
                <Check>Arbeitsfreie Tage kürzel</Check>
                <Check on>Reservezeit</Check>
              </CheckColumn>
              <CheckColumn $w={112}>
                <Check>Kritischen Weg</Check>
                <Check on>Bezeichnungen</Check>
              </CheckColumn>
              <CheckColumn $w={100}>
                <Check on>Verknüpfungen</Check>
              </CheckColumn>
            </GroupBody>
            <GroupLabel>Anzeigen</GroupLabel>
          </RibbonGroup>
        </Ribbon>

        <GanttArea>
          <Panes>
            <LeftPane>
              <DateStrip>
                <StripLabel>Stichtag: 20.04.26 07:45</StripLabel>
                <StripToggle>&lt;&lt;</StripToggle>
              </DateStrip>
              <HeaderRow>
                <Cell>Nr.</Cell>
                <Cell>Name</Cell>
                <Cell>Aufw...</Cell>
                <Cell $right>Dauer</Cell>
                <Cell>Anfang</Cell>
                <Cell>Ende</Cell>
                <Cell>An...</Cell>
                <Cell>En...</Cell>
              </HeaderRow>
              <TableBody>
                {rows.map((r, i) => (
                  <Row key={i} $summary={r.summary}>
                    <NrCell $indent={r.indent || 18}>
                      {r.summary && <Fold />}
                      {r.nr}
                    </NrCell>
                    <Cell>{r.name}</Cell>
                    <Cell $right>{r.a}</Cell>
                    <Cell $right>{r.d}</Cell>
                    <Cell>{r.s}</Cell>
                    <Cell>{r.e}</Cell>
                    <Cell $right $mark={r.anMark} $markW={31}>{r.an}</Cell>
                    <Cell $right $mark={r.enMark} $markW={25}>{r.en}</Cell>
                  </Row>
                ))}
              </TableBody>
            </LeftPane>
            <Splitter />
            <Chart />
            <VScroll>
              <Tri $dir="up" />
              <Tri $dir="down" />
            </VScroll>
          </Panes>
          <HScroll>
            <ScrollButton><HTri $dir="left" /></ScrollButton>
            <ScrollThumb />
            <ScrollButton $end><HTri $dir="right" /></ScrollButton>
          </HScroll>
        </GanttArea>
        <Divider />

        <Detail>
          <NameRow>
            <ShapeMark />
            <NameLabel $w={41}>Name:</NameLabel>
            <TextInput $w={1114} $gap={8}>Kunde ABC 2026</TextInput>
            <NameLabel $w={34}>Code:</NameLabel>
            <TextInput $w={133} />
          </NameRow>
          <DetailBody>
            <FormColumn>
              <FormTabs>
                {formTabs.map(([t, w], i) => (
                  <FormTab key={t} $w={w} $active={i === 0}>{t}</FormTab>
                ))}
              </FormTabs>
              <TabPanel>
                <TermColumn>
                  <TermSet>
                    <TermLegend>Termin</TermLegend>
                    <TermHead>
                      <span />
                      <span>Datum</span>
                      <span>Zeit</span>
                    </TermHead>
                    <DateRow $top={2}>
                      <DateLabel>Anfang:</DateLabel>
                      <DateField value="20.04.26" />
                      <TimeBox>07:45</TimeBox>
                    </DateRow>
                    <DateRow $top={7} $flag>
                      <DateLabel>Ende:</DateLabel>
                      <DateField value="03.07.26" />
                      <TimeBox>09:00</TimeBox>
                    </DateRow>
                  </TermSet>
                  <StandaloneRow>
                    <DateLabel $pad={12}>Stichtag:</DateLabel>
                    <DateField value="20.04.26" />
                    <TimeBox>07:45</TimeBox>
                  </StandaloneRow>
                </TermColumn>

                <FieldColumn $w={254}>
                  <FieldRow $gap={9}>
                    <FieldLabel $w={56}>Kalender:</FieldLabel>
                    <Select $w={135}>1 Standard 40-Stunden-<Caret /></Select>
                    <DotsButton>...</DotsButton>
                  </FieldRow>
                  <FieldRow>
                    <FieldLabel $w={65}>Priorität:</FieldLabel>
                    <NumberInput>100</NumberInput>
                  </FieldRow>
                  <FieldRow>
                    <FieldLabel $w={65}>Kategorie:</FieldLabel>
                    <Select $w={167} $pad={6}>- Nicht ausgewählt -<Caret /></Select>
                  </FieldRow>
                  <FieldRow>
                    <FieldLabel $w={65}>Status:</FieldLabel>
                    <Select $w={167} $pad={6}>- Nicht ausgewählt -<Caret /></Select>
                  </FieldRow>
                  <FieldRow>
                    <FieldLabel $w={65}>Kunde:</FieldLabel>
                    <Select $w={167} $pad={6}>- Nicht ausgewählt -<Caret /></Select>
                  </FieldRow>
                  <FieldRow>
                    <FieldLabel $w={65}>Basisplan:</FieldLabel>
                    <Select $w={167} $border="#a8a8a8"><span /><Caret $color="#ccc" /></Select>
                  </FieldRow>
                </FieldColumn>

                <FieldColumn $w={274}>
                  <FieldRow>
                    <FieldLabel $w={63}>Zeitschritt:</FieldLabel>
                    <Select $w={191}>15 Minuten<Caret /></Select>
                  </FieldRow>
                  <FieldRow>
                    <FieldLabel $w={63}>Dauer:</FieldLabel>
                    <Select $w={191}>In Arbeitstagen(Projektkalender abh<Caret /></Select>
                  </FieldRow>
                  <FieldRow>
                    <FieldLabel $w={63}>Aufwand:</FieldLabel>
                    <Select $w={191}>In Arbeitstagen(Projektkalender abh<Caret /></Select>
                  </FieldRow>
                  <FormChecks>
                    <FormCheck><Box />Arbeitsergebnis für Vorgang eingeben (z.B. 150 M²)</FormCheck>
                    <FormCheck><Box><CheckMark /></Box>Aufwand für Vorgang erfassen (z.B. 5 Manntagen)</FormCheck>
                    <FormCheck><Box />Personalaufwand dynamisch verteilen</FormCheck>
                  </FormChecks>
                </FieldColumn>

                <PlanColumn>
                  <FieldRow $h={48} $align="flex-start">
                    <FieldLabel $w={54} $pt={3}>Planung:</FieldLabel>
                    <RadioStack>
                      <RadioRow><Radio $on />Kapazitätstreue</RadioRow>
                      <RadioRow><Radio />Termintreue</RadioRow>
                    </RadioStack>
                  </FieldRow>
                  <FieldRow $top={4}>
                    <FieldLabel $w={53} $pb={4}>Farbe:</FieldLabel>
                    <Select $w={110} $border="#a8a8a8">
                      <Swatch />
                      <SwatchText><u>A</u>utomatische...</SwatchText>
                      <Caret />
                    </Select>
                  </FieldRow>
                  <AreaCheck>
                    <Box />
                    {"Farbe für untergeordnete\nTeilprojekte und Vorgänge\nverwenden"}
                  </AreaCheck>
                </PlanColumn>
              </TabPanel>
            </FormColumn>
            <ButtonColumn>
              <ActionButton $primary>OK</ActionButton>
              <ActionButton>Abbrechen</ActionButton>
              <ActionButton $top={34}>Hilfe</ActionButton>
            </ButtonColumn>
          </DetailBody>
        </Detail>

        <StatusBar>
          MANDANT: Video_Produktion
          <StatusRefresh><RefreshCw size={13} color="#fff" strokeWidth={2.2} /></StatusRefresh>
          <StatusRight>
            <ViewButton $active><GanttView /></ViewButton>
            <ViewButton><TeamView /></ViewButton>
            <ViewButton><ChartView /></ViewButton>
            <StatusItem $ml={8}>WOCHE 1 : 2</StatusItem>
            <StatusItem $ml={6}><Caret $color="#6f86ad" /></StatusItem>
            <StatusItem $ml={9}><Minus size={12} color="#fff" strokeWidth={3} /></StatusItem>
            <ZoomSlider />
            <Plus size={12} color="#fff" strokeWidth={3} />
            <StatusItem $ml={6}>120 %</StatusItem>
            <StatusItem $ml={7}><Caret $color="#6f86ad" /></StatusItem>
            <Grip />
          </StatusRight>
        </StatusBar>
        <RedArrows />
      </Window>
    </>
  );
}
